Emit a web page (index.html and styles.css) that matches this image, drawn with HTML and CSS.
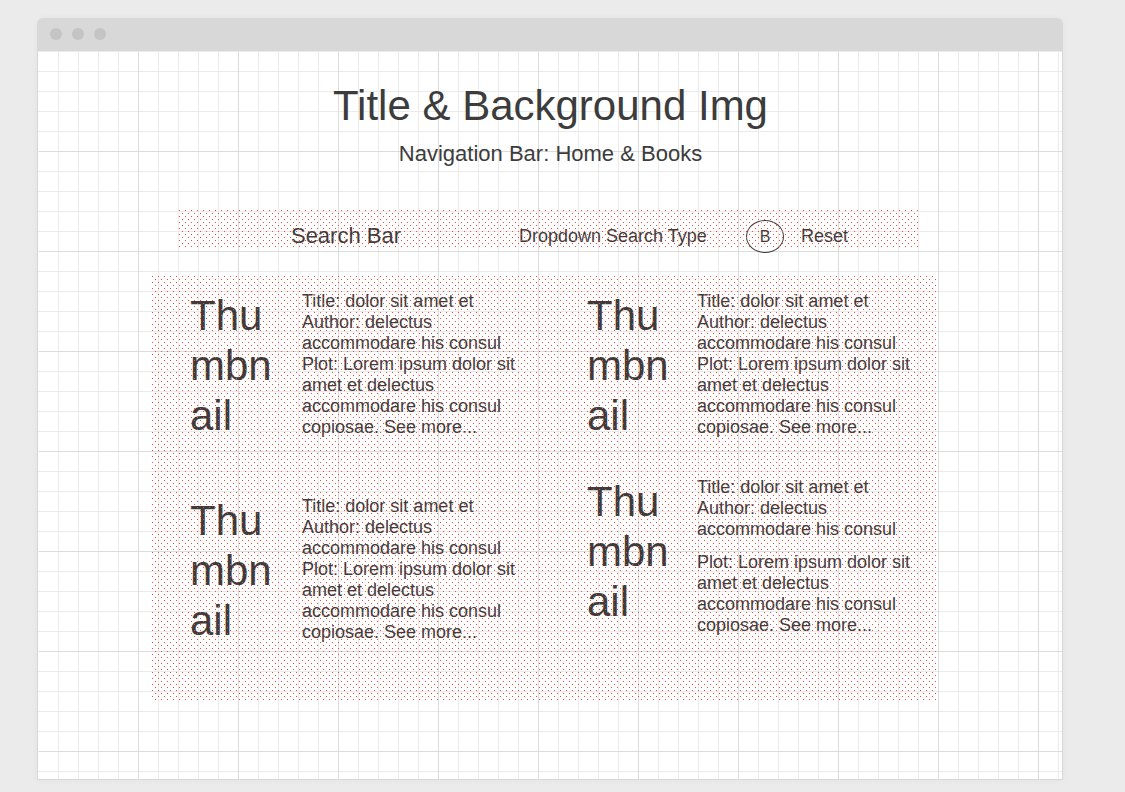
FILE: index.html
```html
<!DOCTYPE html>
<html lang="en">
<head>
<meta charset="utf-8">
<meta name="viewport" content="width=device-width, initial-scale=1">
<title>Books wireframe</title>
<link rel="stylesheet" href="styles.css">
</head>
<body>
<div class="browser">
  <div class="browser-bar"><span class="dot"></span><span class="dot"></span><span class="dot"></span></div>
  <div class="canvas">
    <header class="header">
      <h1 class="title">Title &amp; Background Img</h1>
      <nav class="nav">Navigation Bar: <a href="#home">Home</a> &amp; <a href="#books">Books</a></nav>
    </header>
    <form class="search dotted">
      <input class="search-input" type="text" aria-label="Search Bar" placeholder="Search Bar">
      <select class="search-type" aria-label="Dropdown Search Type"><option>Dropdown Search Type</option></select>
      <button class="search-go" type="button">B</button>
      <button class="search-reset" type="reset">Reset</button>
    </form>
    <main class="books dotted">
      <div class="column">
        <article class="book">
          <div class="thumb">Thumbnail</div>
          <div class="info">
            <p>Title: dolor sit amet et</p>
            <p>Author: delectus accommodare his consul</p>
            <p>Plot: Lorem ipsum dolor sit amet et delectus accommodare his consul copiosae. <a href="#more">See more...</a></p>
          </div>
        </article>
        <article class="book">
          <div class="thumb">Thumbnail</div>
          <div class="info">
            <p>Title: dolor sit amet et</p>
            <p>Author: delectus accommodare his consul</p>
            <p>Plot: Lorem ipsum dolor sit amet et delectus accommodare his consul copiosae. <a href="#more">See more...</a></p>
          </div>
        </article>
      </div>
      <div class="column column-end">
        <article class="book">
          <div class="thumb">Thumbnail</div>
          <div class="info">
            <p>Title: dolor sit amet et</p>
            <p>Author: delectus accommodare his consul</p>
            <p>Plot: Lorem ipsum dolor sit amet et delectus accommodare his consul copiosae. <a href="#more">See more...</a></p>
          </div>
        </article>
        <article class="book">
          <div class="thumb">Thumbnail</div>
          <div class="info">
            <p>Title: dolor sit amet et</p>
            <p>Author: delectus accommodare his consul</p>
            <p class="plot-spaced">Plot: Lorem ipsum dolor sit amet et delectus accommodare his consul copiosae. <a href="#more">See more...</a></p>
          </div>
        </article>
      </div>
    </main>
  </div>
</div>
</body>
</html>
```
FILE: styles.css
```css
* {
  box-sizing: border-box;
}

body {
  display: flex;
  min-height: 100vh;
  margin: 0;
  padding: 18px 62px 12px 37px;
  background: #ebebeb;
  color: #3c3c3c;
  font-family: "Liberation Sans", Arial, sans-serif;
  font-size: 18px;
  line-height: 21px;
}

a {
  color: inherit;
  text-decoration: none;
}

p {
  margin: 0;
}

.browser {
  display: flex;
  flex-direction: column;
  flex: 1;
  min-width: 0;
  border-radius: 6px 6px 0 0;
  box-shadow: 0 0 6px rgba(0, 0, 0, 0.04);
}

.browser-bar {
  display: flex;
  align-items: center;
  gap: 10px;
  height: 33px;
  padding: 0 13px 1px;
  border-radius: 6px 6px 0 0;
  background: #d8d8d8;
}

.dot {
  width: 12px;
  height: 12px;
  border-radius: 50%;
  background: #c4c4c4;
}

/* Graph paper: light lines every 20px, darker ones every 100px. */
.canvas {
  flex: 1;
  padding: 1px 0 0 1px;
  border: 1px solid #d8d8d8;
  border-top: 0;
  background-color: #fff;
  background-image:
    linear-gradient(to right, transparent 99px, #dcdcdc 99px),
    linear-gradient(to bottom, transparent 99px, #dcdcdc 99px),
    linear-gradient(to right, transparent 19px, #ebebeb 19px),
    linear-gradient(to bottom, transparent 19px, #ebebeb 19px);
  background-size: 100px 100px, 100px 100px, 20px 20px, 20px 20px;
  background-origin: content-box;
  background-clip: content-box, content-box, content-box, padding-box;
}

.header {
  padding-top: 29px;
  text-align: center;
}

.title {
  margin: 0;
  font-size: 42px;
  font-weight: 400;
  line-height: 50px;
}

.nav {
  margin-top: 10px;
  font-size: 22px;
  line-height: 26px;
}

.dotted {
  position: relative;
}

/* Staggered one-pixel dots drawn over the content. */
.dotted::after {
  content: "";
  position: absolute;
  inset: 0;
  background-image:
    conic-gradient(from 270deg at 1px 1px, #f04a3c 90deg, transparent 0),
    conic-gradient(from 270deg at 1px 1px, #f04a3c 90deg, transparent 0);
  background-size: 6px 6px;
  background-position: 0 0, 3px 3px;
  pointer-events: none;
}

.search {
  display: flex;
  align-items: center;
  height: 37px;
  margin: 43px 143px 0 140px;
  padding: 16px 71px 0 0;
}

.search > * {
  flex-shrink: 0;
  margin: 0;
  padding: 0 0 2px;
  border: 0;
  background: none;
  color: inherit;
  font-family: inherit;
  font-size: 18px;
  line-height: 26px;
}

.search .search-input {
  flex: 1 1 0;
  min-width: 0;
  height: 28px;
  margin-right: 6px;
  outline: 0;
  font-size: 22px;
  text-align: center;
}

.search-input::placeholder {
  color: inherit;
  opacity: 1;
}

.search .search-type {
  width: 192px;
  margin-right: 35px;
  appearance: none;
}

.search .search-go {
  width: 38px;
  height: 33px;
  margin-right: 17px;
  padding: 0;
  border: 1px solid #3c3c3c;
  border-radius: 50%;
  font-size: 16px;
}

.books {
  display: grid;
  grid-template-columns: 397fr 350fr;
  margin: 29px 125px 0 113px;
  padding: 15px 0 54px 38px;
}

.column {
  display: flex;
  flex-direction: column;
  gap: 55px;
}

.column-end {
  gap: 36px;
}

.book {
  display: flex;
  gap: 22px;
  min-height: 150px;
}

.column-end .book {
  gap: 20px;
}

.thumb {
  width: 90px;
  font-size: 42px;
  line-height: 50px;
  word-break: break-all;
}

.info {
  max-width: 230px;
}

.plot-spaced {
  margin-top: 12px;
}
```
